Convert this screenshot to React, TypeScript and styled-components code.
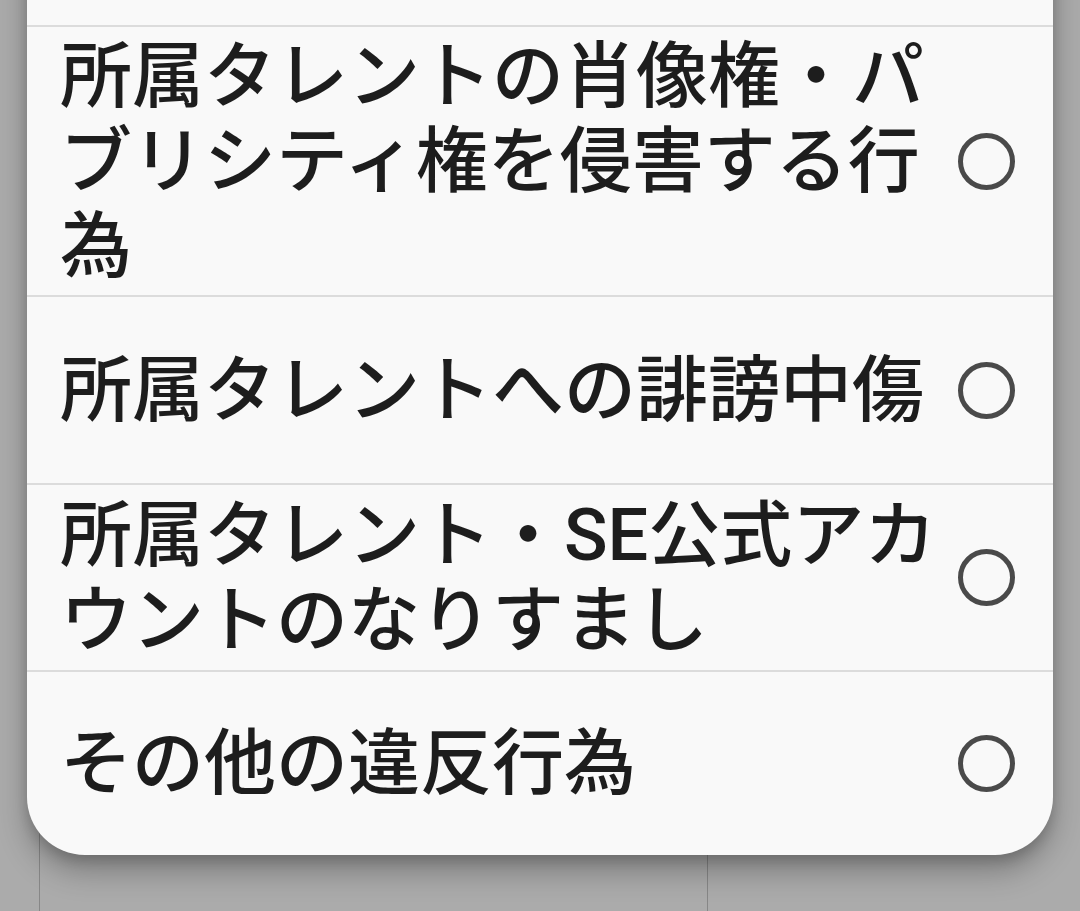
import React, { useState } from "react";
import styled, { createGlobalStyle } from "styled-components";

const GlobalStyle = createGlobalStyle`
  html, body {
    margin: 0;
    padding: 0;
    background: #ababab;
    overflow: hidden;
  }
  * { box-sizing: border-box; }
`;

const Screen = styled.div`
  position: relative;
  width: 1080px;
  height: 911px;
  overflow: hidden;
  background: #ababab;
`;

const Underlay = styled.div`
  display: grid;
  grid-template-columns: 40px 668px 1fr;
  height: 100%;
`;

const UnderCell = styled.div<{ $line?: boolean }>`
  border-right: ${(p) => (p.$line ? "1px solid #878787" : "none")};
`;

const Dialog = styled.div`
  position: absolute;
  left: 27px;
  right: 27px;
  bottom: 56px;
  display: flex;
  flex-direction: column;
  background: #f9f9f9;
  border-radius: 0 0 58px 58px;
  box-shadow: 0 16px 30px rgba(0, 0, 0, 0.28), 0 6px 12px rgba(0, 0, 0, 0.14);
`;

const RowTail = styled.div`
  height: 125px;
  border-bottom: 2px solid #dcdcdc;
`;

const Option = styled.label<{ $last?: boolean; $h: number }>`
  display: flex;
  align-items: center;
  min-height: ${(p) => p.$h}px;
  padding: 6px 38px 6px 33px;
  border-bottom: ${(p) => (p.$last ? "none" : "2px solid #dcdcdc")};
  cursor: pointer;
`;

const Label = styled.span`
  flex: 0 0 890px;
  font-family: Roboto, "Noto Sans CJK JP", sans-serif;
  font-weight: 500;
  font-size: 72px;
  line-height: 85px;
  color: #1d1d1d;
  word-break: break-all;
  line-break: strict;
`;

const Radio = styled.span<{ $checked?: boolean }>`
  flex: 0 0 57px;
  width: 57px;
  height: 57px;
  margin-left: 8px;
  border-radius: 50%;
  border: 5px solid #4a4a4a;
  background: ${(p) => (p.$checked ? "radial-gradient(circle, #4a4a4a 45%, transparent 47%)" : "transparent")};
`;

const options = [
  { text: "所属タレントの肖像権・パブリシティ権を侵害する行為", h: 270 },
  { text: "所属タレントへの誹謗中傷", h: 188 },
  { text: "所属タレント・SE公式アカウントのなりすまし", h: 187 },
  { text: "その他の違反行為", h: 183 },
];

export default function App() {
  const [selected, setSelected] = useState<number | null>(null);
  return (
    <>
      <GlobalStyle />
      <Screen>
        <Underlay>
          <UnderCell $line />
          <UnderCell $line />
          <UnderCell />
        </Underlay>
        <Dialog role="radiogroup">
          <RowTail />
          {options.map((o, i) => (
            <Option
              key={o.text}
              $h={o.h}
              $last={i === options.length - 1}
              onClick={() => setSelected(i)}
            >
              <Label>{o.text}</Label>
              <Radio role="radio" aria-checked={selected === i} $checked={selected === i} />
            </Option>
          ))}
        </Dialog>
      </Screen>
    </>
  );
}
